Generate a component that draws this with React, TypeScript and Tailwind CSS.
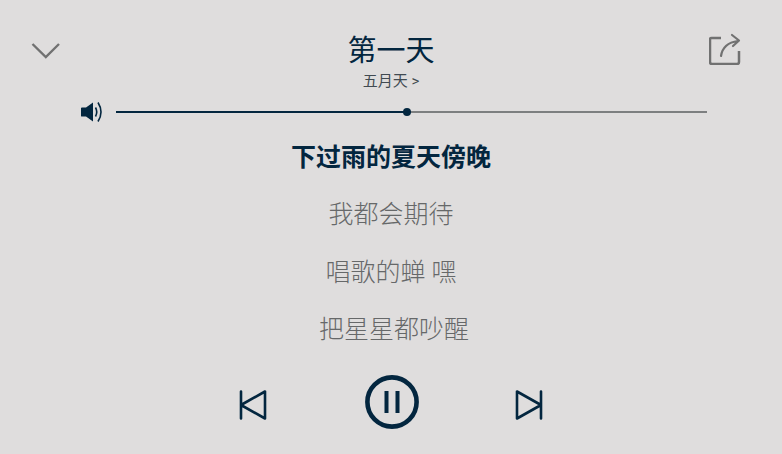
const lyrics = [
  { text: "我都会期待", className: "" },
  { text: "唱歌的蝉 嘿", className: "" },
  { text: "把星星都吵醒", className: "pl-[6px]" },
];

export default function App() {
  return (
    <div className="flex h-[454px] w-[782px] flex-col overflow-hidden bg-[#dfdddd] font-['Roboto','Noto_Sans_CJK_SC',sans-serif] text-[#03263f]">
      <header className="grid h-[100px] grid-cols-[1fr_auto_1fr] items-start pl-[31px] pr-[41px] pt-[32px]">
        <svg width="30" height="18" viewBox="0 0 30 18" fill="none" className="mt-[10px]">
          <path d="M1.5 2 L14.8 15 L28 2" stroke="#717171" strokeWidth="2.4" />
        </svg>
        <div className="ml-[10px] flex flex-col items-center">
          <h1 className="text-[29px] leading-[38px] font-normal">第一天</h1>
          <p className="mt-[2px] text-[15px] leading-[18px] text-[#414a51]">五月天 &gt;</p>
        </div>
        <svg width="32" height="32" viewBox="0 0 32 32" fill="none" stroke="#717171" strokeWidth="2.2" className="mt-px justify-self-end">
          <path d="M12 5 H2.5 Q1 5 1 6.5 V29 Q1 31 3 31 H28 Q30 31 30 29 V18" strokeWidth="2.5" />
          <path d="M12 23 Q14 10 29 8 M23 2 L30 7.5 L24 13" strokeLinecap="round" strokeLinejoin="round" />
        </svg>
      </header>

      <div className="flex h-[24px] items-center pl-[81px] pr-[75px]">
        <svg width="22" height="22" viewBox="0 0 22 22" fill="#03263f">
          <path d="M0 7 Q0 6.5 1 6.5 H5 L12 1.5 V20.5 L5 15.5 H1 Q0 15.5 0 15 Z" />
          <path d="M14.5 6.5 Q17 11 14.5 15.5" fill="none" stroke="#03263f" strokeWidth="1.6" />
          <path d="M17 1.5 Q23 11 17 20.5" fill="none" stroke="#03263f" strokeWidth="1.6" />
        </svg>
        <div className="relative ml-[13px] flex h-[2px] flex-1 bg-[#7d7f80]">
          <div className="h-full w-[291px] bg-[#03263f]" />
          <div className="absolute left-[287px] top-[-3px] h-[8px] w-[8px] rounded-full bg-[#03263f]" />
        </div>
      </div>

      <main className="flex flex-col items-center pt-[12.5px]">
        <p className="h-[57.5px] text-[25px] leading-[42px] font-bold">下过雨的夏天傍晚</p>
        {lyrics.map((line) => (
          <p key={line.text} className={`h-[57.5px] text-[25px] leading-[42px] font-light text-[#666869] ${line.className}`}>
            {line.text}
          </p>
        ))}
      </main>

      <footer className="ml-[239px] mt-[9.5px] flex w-[304px] items-center justify-between">
        <svg width="28" height="30" viewBox="0 0 28 30" fill="none" stroke="#03263f" strokeWidth="2.6" strokeLinecap="round" strokeLinejoin="round" className="mt-[4px]">
          <path d="M2 1.5 V28.5 M2 15 L26 1.5 V28.5 Z" />
        </svg>
        <svg width="54" height="54" viewBox="0 0 54 54" fill="none" stroke="#03263f" className="translate-x-px -translate-y-px">
          <circle cx="27" cy="27" r="24.6" strokeWidth="4.6" />
          <path d="M21.5 16 V38 M32.5 16 V38" strokeWidth="4" />
        </svg>
        <svg width="28" height="30" viewBox="0 0 28 30" fill="none" stroke="#03263f" strokeWidth="2.6" strokeLinecap="round" strokeLinejoin="round" className="mt-[4px]">
          <path d="M26 1.5 V28.5 M26 15 L2 1.5 V28.5 Z" />
        </svg>
      </footer>
    </div>
  );
}
